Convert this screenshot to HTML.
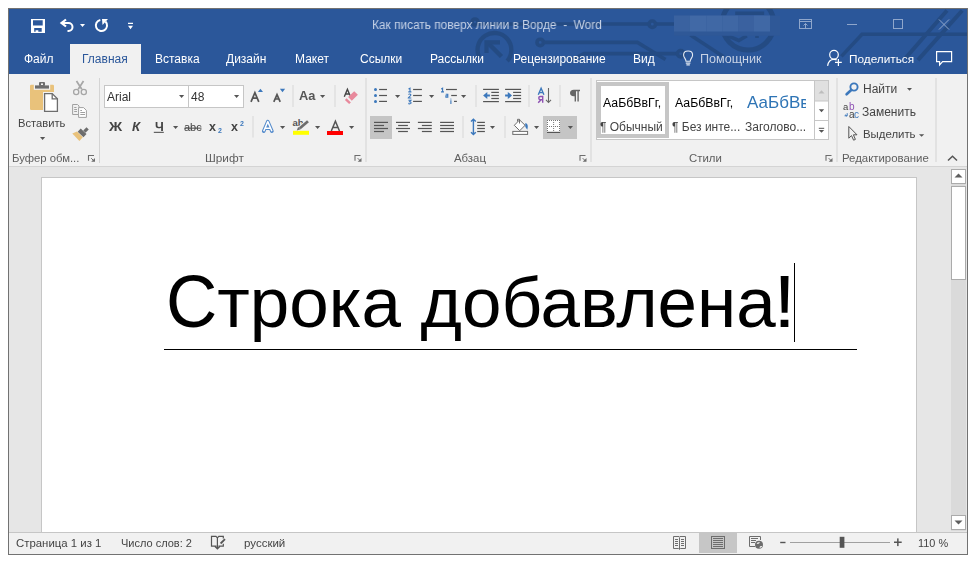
<!DOCTYPE html>
<html><head><meta charset="utf-8">
<style>
*{margin:0;padding:0;box-sizing:border-box}
html,body{width:968px;height:563px;background:#fff;overflow:hidden;position:relative;font-family:"Liberation Sans",sans-serif}
.a{position:absolute}
.t{position:absolute;white-space:pre;line-height:1;font-family:"Liberation Sans",sans-serif;will-change:transform}
svg{overflow:visible}
</style></head><body>
<div class="a" style="left:8px;top:8px;width:960px;height:547px;background:#e6e6e6;border:1px solid #727272"></div>
<div class="a" style="left:9px;top:9px;width:958px;height:65px;background:#2b579a"></div>
<div class="a" style="left:9px;top:74px;width:958px;height:93px;background:#f1f1f1;border-bottom:1px solid #d4d4d4"></div>
<div class="a" style="left:70px;top:44px;width:71px;height:30px;background:#f1f1f1"></div>
<div class="a" style="left:41px;top:177px;width:876px;height:356px;background:#fff;border:1px solid #c6c6c6;border-bottom:none"></div>
<div class="a" style="left:951px;top:169px;width:15px;height:362px;background:#dadada"></div>
<div class="a" style="left:951px;top:169px;width:15px;height:15px;background:#fff;border:1px solid #ababab"></div>
<div class="a" style="left:951px;top:186px;width:15px;height:94px;background:#fff;border:1px solid #ababab"></div>
<div class="a" style="left:951px;top:515px;width:15px;height:15px;background:#fff;border:1px solid #ababab"></div>
<div class="a" style="left:9px;top:532px;width:958px;height:22px;background:#f1f1f1;border-top:1px solid #c6c6c6"></div>
<div class="a" style="left:104px;top:85px;width:85px;height:23px;background:#fff;border:1px solid #c6c6c6"></div>
<div class="a" style="left:188px;top:85px;width:56px;height:23px;background:#fff;border:1px solid #c6c6c6"></div>
<div class="a" style="left:596px;top:80px;width:233px;height:60px;background:#fff;border:1px solid #c6c6c6"></div>
<div class="a" style="left:597px;top:82px;width:72px;height:56px;border:4px solid #c6c6c6"></div>
<div class="a" style="left:164px;top:349px;width:693px;height:1px;background:#000"></div>
<div class="a" style="left:794px;top:263px;width:1px;height:79px;background:#000"></div>
<svg class="a" style="left:0;top:0" width="968" height="563" viewBox="0 0 968 563"><clipPath id="tb"><rect x="9" y="9" width="958" height="65"/></clipPath><g fill="none" stroke="#23497f" stroke-width="3.6" opacity="0.82" clip-path="url(#tb)"><path stroke-width="4.3" d="M479.2 57.2A16.9 16.9 0 1 1 507.2 61"/><path stroke-width="4.5" d="M501.5 56.5L487 42"/><path stroke-width="4.2" d="M486.5 53V42.3H500"/><path d="M478 24H649M655.5 24H675"/><circle cx="475" cy="22" r="3"/><circle cx="652.3" cy="24.2" r="3.2"/><circle cx="540.2" cy="42.4" r="3.2"/><path d="M543.5 42.4H637.4L665.5 59.5"/><path d="M572 60L584 53.6H677.5"/><circle cx="680.7" cy="53.7" r="3.2"/><path d="M690.4 35L723.6 56.7"/><circle stroke-width="5" cx="748" cy="24" r="26"/><path d="M728 35.8L738.8 40.5L746.8 35.8M735.2 13.3H764.1M757 35.8V38"/><path d="M841.4 56.4L862 34.2H968"/><path stroke-width="4" d="M905.6 58L947 10.5M917.9 60.2L962.2 10.5"/></g><path fill="#fff" fill-rule="evenodd" d="M31 19H45V33H31Z M33 20.2H42.7V25.6H33Z M34.2 28.1H41.7V31.8H38.3V30.2H35.6V31.8H34.2Z"/><path fill="none" stroke="#fff" stroke-width="2" d="M61 23H68.5A4 4 0 0 1 68.5 31H67.5"/><path fill="none" stroke="#fff" stroke-width="2.2" stroke-linejoin="miter" d="M66 19.5L61.5 23L66 26.5"/><path fill="#fff" d="M80 24H85L82.5 27Z"/><path fill="none" stroke="#fff" stroke-width="2" d="M105.5 21.5A5.6 5.6 0 1 1 100.3 19.9"/><path fill="#fff" d="M102 19H108L102.5 25Z"/><path fill="#fff" d="M128 22.8H133V24.1H128Z M128 25.8H133L130.5 29.2Z"/><g fill="none" stroke="#8fa6cb" stroke-width="1"><rect x="799.5" y="19.5" width="12" height="9"/><path d="M799.5 21.5H811.5 M805.5 28V23.5 M803.5 25.5L805.5 23.5L807.5 25.5"/><path d="M847 24.5H857"/><rect x="893.5" y="19.5" width="9" height="9"/><path d="M939 19.5L949 29.5M949 19.5L939 29.5"/></g><rect x="674" y="15.5" width="106" height="20.3" fill="#2f5897"/><rect x="674" y="15.5" width="15.600000000000023" height="16" fill="#3a62a0"/><rect x="689.6" y="15.5" width="16.699999999999932" height="16" fill="#4169a6"/><rect x="706.3" y="15.5" width="15.900000000000091" height="16" fill="#4068a5"/><rect x="722.2" y="15.5" width="15.899999999999977" height="16" fill="#3f67a4"/><rect x="738.1" y="15.5" width="15.899999999999977" height="16" fill="#3a619f"/><rect x="754" y="15.5" width="16" height="16" fill="#4068a5"/><g fill="none" stroke="#e4eaf3" stroke-width="1.1"><path d="M686 61.2C686 59 683.6 57.6 683.6 54.9C683.6 52.4 685.6 51 688.1 51C690.6 51 692.6 52.4 692.6 54.9C692.6 57.6 690.2 59 690.2 61.2Z"/><path d="M685.8 63.1H690.4M686.4 64.9H689.8"/></g><g fill="none" stroke="#fff" stroke-width="1.2"><circle cx="834" cy="54.7" r="4.3"/><path d="M827.6 65.8C828.2 62 830.8 59.3 834 59.3C835 59.3 835.9 59.5 836.7 59.9"/><path d="M838.4 59V66M835 62.4H841.8"/></g><path fill="none" stroke="#fff" stroke-width="1.2" d="M936.6 51.6H951.6V61.6H942.6L939.6 65V61.6H936.6Z"/><rect x="30" y="84.7" width="24" height="25.3" rx="1.2" fill="#e9c27b"/><rect x="33.8" y="84" width="16.4" height="5.8" fill="#f1f1f1"/><rect x="35" y="85.4" width="14" height="3.2" fill="#6d6d6d"/><rect x="39" y="82.1" width="6" height="3.8" rx="1" fill="#6d6d6d"/><rect x="41" y="83.4" width="2" height="1.6" fill="#f1f1f1"/><rect x="43" y="92" width="16" height="21" fill="#f1f1f1"/><path d="M44.6 93.6H52.2L57.4 98.8V111.4H44.6Z" fill="#fff" stroke="#6d6d6d" stroke-width="1.3"/><path d="M52.2 93.6V98.8H57.4" fill="none" stroke="#6d6d6d" stroke-width="1.3"/><path fill="#555" d="M40 137H45.2L42.6 140Z"/><g fill="none" stroke="#a6a6a6"><path stroke-width="1.7" d="M76.5 81L81.8 89.2M83.5 81L78.2 89.2"/><circle stroke-width="1.3" cx="76.2" cy="92" r="2.6"/><circle stroke-width="1.3" cx="83.8" cy="92" r="2.6"/></g><g fill="#f1f1f1" stroke="#a0a0a0" stroke-width="1"><path d="M72.6 104.5H77.5L79 106V114.5H72.6Z"/><path d="M78.6 107.6H83.6L86.4 110.4V117.4H78.6Z" fill="#fff"/></g><g stroke="#a0a0a0" stroke-width="1"><path d="M74.2 107.5H76.5M74.2 109.5H77M74.2 111.5H77M80.3 110.5H82M80.3 112.5H85M80.3 114.5H85"/></g><path fill="#e9c27b" d="M77 131.6L82.8 137.2L79.4 141L72.3 133.5Z"/><path stroke="#6d6d6d" stroke-width="4.4" d="M79.2 130.2L85 135.6"/><path stroke="#6d6d6d" stroke-width="3.2" d="M84.4 131.6L87.6 128.4"/><rect x="99" y="78" width="1" height="85" fill="#d4d4d4"/><path fill="#555" d="M179 95H184.2L181.6 98Z"/><path fill="#555" d="M234 95H239.2L236.6 98Z"/><g fill="none" stroke="#555" stroke-width="1.7"><path d="M251 101.8L254.9 92.6L258.8 101.8M252.5 98.2H257.3"/><path d="M273.8 101.8L277 94.6L280.2 101.8M275 99H279"/></g><path fill="#3c78bc" d="M257.9 92H263L260.45 88.8Z"/><path fill="#3c78bc" d="M279.9 88.8H285.1L282.5 92.2Z"/><rect x="292.5" y="85" width="1" height="22" fill="#d8d8d8"/><path fill="#555" d="M320 95H325.2L322.6 98Z"/><rect x="334.5" y="85" width="1" height="22" fill="#d8d8d8"/><path fill="none" stroke="#444" stroke-width="1.4" d="M344.3 96.8L347.4 89.3L350 95.6M345.4 94H349"/><path fill="#e8899c" d="M354.2 91.2L357.9 94.8L351.8 100.7L348.1 97Z M346.6 98.2L350.9 102.4L349.1 104.1L344.9 99.9Z"/><path fill="#555" d="M173 126H178.2L175.6 129Z"/><rect x="153.8" y="131.8" width="10" height="1.1" fill="#555"/><rect x="184.5" y="127.6" width="17" height="1.1" fill="#555"/><rect x="252.5" y="116" width="1" height="21.5" fill="#d8d8d8"/><path fill="none" stroke="#4a84c8" stroke-width="3.6" stroke-linejoin="round" stroke-linecap="round" opacity="0.95" d="M263.7 131.2L267.8 121.6L271.9 131.2M265.3 128.2H270.3"/><path fill="none" stroke="#fff" stroke-width="1.5" stroke-linejoin="round" d="M263.7 131.2L267.8 121.6L271.9 131.2M265.3 128.2H270.3"/><path fill="#555" d="M280 126H285.2L282.6 129Z"/><rect x="293" y="130.8" width="16" height="4" fill="#ffff00"/><text x="292.5" y="126" font-family="Liberation Sans" font-size="9.5" font-weight="bold" fill="#555">ab</text><path stroke="#f1f1f1" stroke-width="4.6" d="M299.6 128.4L308.2 121"/><path stroke="#6d6d6d" stroke-width="2.8" d="M299.8 128.2L308 121.2"/><path fill="#6d6d6d" d="M296.8 130.6L298.1 127.1L300.7 129.3Z"/><path fill="#555" d="M315 126H320.2L317.6 129Z"/><rect x="327" y="131" width="16" height="4" fill="#ff0000"/><path fill="none" stroke="#555" stroke-width="1.5" d="M331.3 131L335.4 121.2L339.5 131M332.6 127.6H338.2"/><path fill="#555" d="M349 126H354.2L351.6 129Z"/><rect x="365.5" y="78" width="1" height="84" fill="#d4d4d4"/><circle cx="375.5" cy="89.5" r="1.5" fill="#3c78bc"/><rect x="379.1" y="88.9" width="7.9" height="1.2" fill="#555"/><rect x="413.1" y="88.9" width="8.8" height="1.2" fill="#555"/><circle cx="375.5" cy="95.5" r="1.5" fill="#3c78bc"/><rect x="379.1" y="94.9" width="7.9" height="1.2" fill="#555"/><rect x="413.1" y="94.9" width="8.8" height="1.2" fill="#555"/><circle cx="375.5" cy="101.4" r="1.5" fill="#3c78bc"/><rect x="379.1" y="100.80000000000001" width="7.9" height="1.2" fill="#555"/><rect x="413.1" y="100.80000000000001" width="8.8" height="1.2" fill="#555"/><path fill="#555" d="M395 95H400.2L397.6 98Z"/><path fill="#555" d="M429 95H434.2L431.6 98Z"/><path fill="#555" d="M461 95H466.2L463.6 98Z"/><g fill="none" stroke="#3c78bc" stroke-width="1.1"><path d="M408.5 89L410 88.2V92M408.3 91.9H411.4"/><path d="M408.4 94.5C409 93.8 410.8 93.8 410.9 94.9C411 95.8 408.5 97.2 408.3 98H411.3"/><path d="M408.4 100.2H411L409.6 101.7C410.6 101.7 411.2 102.2 411.1 103C411 103.8 409.2 104.2 408.3 103.5"/></g><g fill="none" stroke="#3c78bc" stroke-width="1.1"><path d="M441.2 89L442.6 88.2V92M441 91.9H444"/><path d="M445.7 94.2H447.8V97.3H445.9V95.8H447.8"/><path d="M450.9 100.3V104"/></g><circle cx="450.9" cy="99" r="0.6" fill="#3c78bc"/><rect x="446" y="88.9" width="10.9" height="1.2" fill="#555"/><rect x="451.2" y="94.9" width="5.7" height="1.2" fill="#555"/><rect x="454" y="100.8" width="2.9" height="1.2" fill="#555"/><rect x="475.5" y="85" width="1" height="22" fill="#d8d8d8"/><g fill="#555"><rect x="483.1" y="88.8" width="15.8" height="1.2"/><rect x="491.3" y="91.8" width="7.6" height="1.2"/><rect x="491.3" y="94.9" width="7.6" height="1.2"/><rect x="491.3" y="97.9" width="7.6" height="1.2"/><rect x="483.1" y="101" width="15.8" height="1.2"/><rect x="505.1" y="88.8" width="16" height="1.2"/><rect x="513.1" y="91.8" width="8" height="1.2"/><rect x="513.1" y="94.9" width="8" height="1.2"/><rect x="513.1" y="97.9" width="8" height="1.2"/><rect x="505.1" y="101" width="16" height="1.2"/></g><path fill="#3c78bc" d="M483.1 95.5L487.3 91.9V94.4H489.9V96.6H487.3V99.1Z"/><path fill="#3c78bc" d="M512 95.5L507.8 91.9V94.4H505.1V96.6H507.8V99.1Z"/><rect x="528.5" y="85" width="1" height="22" fill="#d8d8d8"/><path fill="none" stroke="#3c78bc" stroke-width="1.4" d="M538.3 94.7L541.1 88.3L543.9 94.7M539.3 92.6H542.9"/><path fill="none" stroke="#8e52b3" stroke-width="1.4" d="M542.7 102.8V96.5H540.4C538.2 96.5 538.2 99.7 540.4 99.7H542.7M541 99.7L538.2 102.8"/><path fill="none" stroke="#666" stroke-width="1.1" d="M548.5 88V102.5M546 99.8L548.5 102.5L551 99.8"/><rect x="559.5" y="85" width="1" height="22" fill="#d8d8d8"/><path fill="#666" d="M573.8 89.8H580V91.2H578.8V101.6H577.4V91.2H576V101.6H574.6V96.2H573.8C571.2 96.2 570 94.7 570 93C570 91.2 571.3 89.8 573.8 89.8Z"/><rect x="370" y="116" width="22" height="23" fill="#c5c5c5"/><rect x="374" y="121.80000000000001" width="14" height="1.2" fill="#555"/><rect x="396" y="121.80000000000001" width="14" height="1.2" fill="#555"/><rect x="417.9" y="121.80000000000001" width="13.9" height="1.2" fill="#555"/><rect x="440.1" y="121.80000000000001" width="13.9" height="1.2" fill="#555"/><rect x="477.2" y="121.80000000000001" width="7.7" height="1.2" fill="#555"/><rect x="374" y="124.9" width="10" height="1.2" fill="#555"/><rect x="398.1" y="124.9" width="9.8" height="1.2" fill="#555"/><rect x="421.9" y="124.9" width="9.9" height="1.2" fill="#555"/><rect x="440.1" y="124.9" width="13.9" height="1.2" fill="#555"/><rect x="477.2" y="124.9" width="7.7" height="1.2" fill="#555"/><rect x="374" y="127.9" width="14" height="1.2" fill="#555"/><rect x="396" y="127.9" width="14" height="1.2" fill="#555"/><rect x="417.9" y="127.9" width="13.9" height="1.2" fill="#555"/><rect x="440.1" y="127.9" width="13.9" height="1.2" fill="#555"/><rect x="477.2" y="127.9" width="7.7" height="1.2" fill="#555"/><rect x="374" y="130.9" width="10" height="1.2" fill="#555"/><rect x="398.1" y="130.9" width="9.8" height="1.2" fill="#555"/><rect x="421.9" y="130.9" width="9.9" height="1.2" fill="#555"/><rect x="440.1" y="130.9" width="13.9" height="1.2" fill="#555"/><rect x="477.2" y="130.9" width="7.7" height="1.2" fill="#555"/><rect x="462.5" y="116" width="1" height="22" fill="#d8d8d8"/><path fill="none" stroke="#3c78bc" stroke-width="1.4" d="M473.4 119.5V134.3M471 121.6L473.4 119.2L475.8 121.6M471 132.2L473.4 134.6L475.8 132.2"/><path fill="#555" d="M490 126H495L492.5 129Z"/><rect x="504.5" y="116" width="1" height="22" fill="#d8d8d8"/><path fill="#fff" stroke="#6d6d6d" stroke-width="1" d="M514.3 125.3L519.6 119.9L525.1 125.3L519.7 130.7Z"/><path fill="none" stroke="#6d6d6d" stroke-width="1" d="M519.5 123.5V119.3H517.5V121.5"/><path fill="#3c78bc" d="M525.4 122.9C527.5 123.4 528.5 125.6 527.3 129.7C526.4 128.2 525.2 127.4 525.2 125.7Z"/><rect x="512.8" y="131.4" width="14.8" height="3" fill="#fff" stroke="#6d6d6d" stroke-width="1"/><path fill="#555" d="M534 126H539.1L536.55 129Z"/><rect x="543" y="116" width="34" height="23" fill="#c5c5c5"/><rect x="547" y="120" width="13" height="12.6" fill="#fff"/><g fill="#555"><rect x="547" y="120" width="0.9" height="0.9"/><rect x="549" y="120" width="0.9" height="0.9"/><rect x="551" y="120" width="0.9" height="0.9"/><rect x="553.2" y="120" width="0.9" height="0.9"/><rect x="555" y="120" width="0.9" height="0.9"/><rect x="557" y="120" width="0.9" height="0.9"/><rect x="559.1" y="120" width="0.9" height="0.9"/><rect x="547" y="122" width="0.9" height="0.9"/><rect x="547" y="124" width="0.9" height="0.9"/><rect x="547" y="128" width="0.9" height="0.9"/><rect x="547" y="130" width="0.9" height="0.9"/><rect x="553.2" y="122" width="0.9" height="0.9"/><rect x="553.2" y="124" width="0.9" height="0.9"/><rect x="553.2" y="128" width="0.9" height="0.9"/><rect x="553.2" y="130" width="0.9" height="0.9"/><rect x="559.1" y="122" width="0.9" height="0.9"/><rect x="559.1" y="124" width="0.9" height="0.9"/><rect x="559.1" y="128" width="0.9" height="0.9"/><rect x="559.1" y="130" width="0.9" height="0.9"/><rect x="547" y="126" width="0.9" height="0.9"/><rect x="549" y="126" width="0.9" height="0.9"/><rect x="551" y="126" width="0.9" height="0.9"/><rect x="553.2" y="126" width="0.9" height="0.9"/><rect x="555" y="126" width="0.9" height="0.9"/><rect x="557" y="126" width="0.9" height="0.9"/><rect x="559.1" y="126" width="0.9" height="0.9"/></g><rect x="547" y="131.8" width="13.2" height="1.2" fill="#555"/><path fill="#555" d="M567.8 126H573.0L570.4 129Z"/><rect x="590.5" y="78" width="1" height="84" fill="#d4d4d4"/><rect x="815" y="81" width="13" height="20" fill="#e0e0e0"/><path fill="#bdbdbd" d="M818.5 93.5H824.5L821.5 90.3Z"/><path fill="none" stroke="#c6c6c6" d="M814.5 80.5V139.5M814.5 101H828.5M814.5 120.5H828.5"/><path fill="#555" d="M818.8 109.3H824.2L821.5 112.2Z"/><rect x="818.8" y="127.8" width="5.4" height="1" fill="#555"/><path fill="#555" d="M818.8 130H824.2L821.5 132.8Z"/><rect x="836.5" y="78" width="1" height="84" fill="#d4d4d4"/><circle cx="854" cy="87" r="3.6" fill="none" stroke="#3c78bc" stroke-width="1.9"/><path stroke="#3c78bc" stroke-width="2.6" stroke-linecap="round" d="M851.2 90L846.6 94.3"/><path fill="#555" d="M907 88H912L909.5 90.8Z"/><path fill="none" stroke="#555" stroke-width="1" d="M848.8 126.5V138.2L851.5 135.6L853.6 140.2L855.4 139.4L853.4 134.8H857Z"/><path fill="#555" d="M919 134.2H924.2L921.6 136.7Z"/><path fill="none" stroke="#3c78bc" stroke-width="1" d="M847.2 113.2V115.8H844.6M845.5 114.6L846.5 116.4"/><rect x="935.5" y="78" width="1" height="84" fill="#d4d4d4"/><path fill="none" stroke="#555" stroke-width="1.5" d="M948 160.5L952.5 156.2L957 160.5"/><path fill="none" stroke="#6d6d6d" stroke-width="1.1" d="M88.5 160.8V155.5H94"/><path fill="#6d6d6d" d="M95 158V161.7H91.2Z"/><path stroke="#6d6d6d" stroke-width="1" d="M91.2 158.2L94 161"/><path fill="none" stroke="#6d6d6d" stroke-width="1.1" d="M355.0 160.8V155.5H360.5"/><path fill="#6d6d6d" d="M361.5 158V161.7H357.7Z"/><path stroke="#6d6d6d" stroke-width="1" d="M357.7 158.2L360.5 161"/><path fill="none" stroke="#6d6d6d" stroke-width="1.1" d="M580.0 160.8V155.5H585.5"/><path fill="#6d6d6d" d="M586.5 158V161.7H582.7Z"/><path stroke="#6d6d6d" stroke-width="1" d="M582.7 158.2L585.5 161"/><path fill="none" stroke="#6d6d6d" stroke-width="1.1" d="M826.0 160.8V155.5H831.5"/><path fill="#6d6d6d" d="M832.5 158V161.7H828.7Z"/><path stroke="#6d6d6d" stroke-width="1" d="M828.7 158.2L831.5 161"/><g fill="none" stroke="#555" stroke-width="1.2"><path d="M217.4 538V548.5M215 546.5L217.4 548.8L219.8 546.5M216.5 546.2H211.5V536.4H216L217.4 537.8L218.8 536.4H223.3V538.5M223.3 543.8V546.2H218.4"/><path stroke-width="1.8" d="M220.6 543.5L225 539.2"/></g><g fill="none" stroke="#6d6d6d" stroke-width="1"><path d="M673.5 536.5H679L679.5 537.2L680 536.5H685.5V548.5H680.5L679.5 549.5L678.5 548.5H673.5Z"/><path d="M675 539.5H678M675 541.5H678M675 543.5H678M675 545.5H678M681 539.5H684M681 541.5H684M681 543.5H684M681 545.5H684M679.5 537.5V549"/></g><rect x="699" y="533" width="38" height="20" fill="#c6c6c6"/><g fill="none" stroke="#6d6d6d" stroke-width="1"><rect x="711.5" y="536.5" width="13" height="12"/><path d="M713 538.5H723M713 540.5H723M713 542.5H723M713 544.5H723M713 546.5H723"/></g><g fill="none" stroke="#6d6d6d" stroke-width="1"><path d="M755 546.5H749.5V536.5H760.5V540"/><path d="M751 538.5H758M751 540.5H756M751 542.5H755"/></g><circle cx="759" cy="544.8" r="4" fill="#6d6d6d"/><path fill="#f1f1f1" d="M756.6 543.6C757.4 542.2 759.1 541.8 760 542.6C759.2 543.7 758 544.4 756.6 543.6Z M759.4 547.4C760.2 546 761.4 545.8 762.2 546.3C761.6 547.5 760.6 548 759.4 547.4Z"/><rect x="780.2" y="541.8" width="5.3" height="1.4" fill="#555"/><rect x="790" y="542" width="100" height="1" fill="#a0a0a0"/><rect x="839.7" y="536.8" width="4.7" height="11" fill="#555"/><rect x="894" y="541.5" width="7.7" height="1.5" fill="#555"/><rect x="897.1" y="538.4" width="1.5" height="7.7" fill="#555"/></svg>
<svg class="a" style="left:951px;top:169px;" width="15" height="15" viewBox="0 0 15 15"><path d="M3.5 8.6H11.5L7.5 4.6Z" fill="#5f5f5f"/></svg>
<svg class="a" style="left:951px;top:515px;" width="15" height="15" viewBox="0 0 15 15"><path d="M3.5 5.5H11.5L7.5 9.5Z" fill="#5f5f5f"/></svg>
<div class="t" style="left:372px;top:19px;font-size:12.5px;color:#c6d2e6;transform:scaleX(0.95);transform-origin:0 0">Как писать поверх линии в Ворде  -  Word</div>
<div class="t" style="left:24px;top:53px;font-size:12px;color:#fff;">Файл</div>
<div class="t" style="left:155px;top:53px;font-size:12px;color:#fff;">Вставка</div>
<div class="t" style="left:226px;top:53px;font-size:12px;color:#fff;">Дизайн</div>
<div class="t" style="left:295px;top:53px;font-size:12px;color:#fff;">Макет</div>
<div class="t" style="left:360px;top:53px;font-size:12px;color:#fff;">Ссылки</div>
<div class="t" style="left:430px;top:53px;font-size:12px;color:#fff;">Рассылки</div>
<div class="t" style="left:513px;top:53px;font-size:12px;color:#fff;">Рецензирование</div>
<div class="t" style="left:633px;top:53px;font-size:12px;color:#fff;">Вид</div>
<div class="t" style="left:82px;top:53px;font-size:12px;color:#2b579a;">Главная</div>
<div class="t" style="left:700px;top:53px;font-size:12.6px;color:#c6d1e4;">Помощник</div>
<div class="t" style="left:849px;top:53.5px;font-size:11.8px;color:#fff;">Поделиться</div>
<div class="t" style="left:18px;top:118px;font-size:11.2px;color:#444;">Вставить</div>
<div class="t" style="left:12px;top:153px;font-size:11.3px;color:#5e5e5e;">Буфер обм...</div>
<div class="t" style="left:205px;top:153px;font-size:11.8px;color:#5e5e5e;">Шрифт</div>
<div class="t" style="left:454px;top:153px;font-size:11.4px;color:#5e5e5e;">Абзац</div>
<div class="t" style="left:689px;top:153px;font-size:11.4px;color:#5e5e5e;">Стили</div>
<div class="t" style="left:842px;top:153px;font-size:11.4px;color:#5e5e5e;">Редактирование</div>
<div class="t" style="left:107px;top:91px;font-size:12px;color:#333;">Arial</div>
<div class="t" style="left:191px;top:91px;font-size:12px;color:#333;">48</div>
<div class="t" style="left:603px;top:97px;font-size:12.3px;color:#000;">АаБбВвГг,</div>
<div class="t" style="left:600px;top:121px;font-size:12px;color:#444;">¶ Обычный</div>
<div class="t" style="left:675px;top:97px;font-size:12.3px;color:#000;">АаБбВвГг,</div>
<div class="t" style="left:672px;top:121px;font-size:12px;color:#444;">¶ Без инте...</div>
<div class="a" style="left:745px;top:90px;width:61px;height:24px;overflow:hidden"><div class="t" style="left:2px;top:4px;font-size:17px;color:#2e74b5">АаБбВв</div></div>
<div class="t" style="left:745px;top:121px;font-size:12px;color:#444;">Заголово...</div>
<div class="t" style="left:108.5px;top:121px;font-size:12.5px;color:#444;font-weight:bold;transform:scaleX(1.16);transform-origin:0 0">Ж</div>
<div class="t" style="left:132px;top:121px;font-size:12.5px;color:#444;font-weight:bold;font-style:italic;transform:scaleX(1.06);transform-origin:0 0">К</div>
<div class="t" style="left:155px;top:121px;font-size:12.5px;color:#444;font-weight:bold">Ч</div>
<div class="t" style="left:184px;top:122px;font-size:11px;color:#444;">abc</div>
<div class="t" style="left:209px;top:121px;font-size:12.5px;color:#444;font-weight:bold">x</div>
<div class="t" style="left:218px;top:127px;font-size:7px;color:#3c78bc;font-weight:bold">2</div>
<div class="t" style="left:231px;top:121px;font-size:12.5px;color:#444;font-weight:bold">x</div>
<div class="t" style="left:240px;top:120px;font-size:7px;color:#3c78bc;font-weight:bold">2</div>
<div class="t" style="left:299px;top:90px;font-size:12.8px;color:#555;font-weight:bold">Aa</div>
<div class="t" style="left:843px;top:102px;font-size:9.5px;color:#444;">a</div>
<div class="t" style="left:848.5px;top:102px;font-size:10px;color:#8e52b3;">b</div>
<div class="t" style="left:848.5px;top:109.5px;font-size:10px;color:#444;">a</div>
<div class="t" style="left:854px;top:109.5px;font-size:10px;color:#3c78bc;">c</div>
<div class="t" style="left:863px;top:83px;font-size:12px;color:#444;">Найти</div>
<div class="t" style="left:862px;top:106px;font-size:12px;color:#444;">Заменить</div>
<div class="t" style="left:863px;top:129px;font-size:11.4px;color:#444;">Выделить</div>
<div class="t" style="left:16px;top:538px;font-size:11.4px;color:#444;">Страница 1 из 1</div>
<div class="t" style="left:121px;top:538px;font-size:11px;color:#444;">Число слов: 2</div>
<div class="t" style="left:244px;top:538px;font-size:11.5px;color:#444;">русский</div>
<div class="t" style="left:918px;top:537.5px;font-size:10.9px;color:#444;">110 %</div>
<div class="t" style="left:166px;top:267px;font-size:71px;color:#000"><span style="display:inline-block;transform:scaleY(1.045);transform-origin:0 60px">С</span>трока добавлена<span style="display:inline-block;transform:translateX(-1.5px) scaleY(1.04) scaleX(1.15);transform-origin:40% 60px">!</span></div>
</body></html>
